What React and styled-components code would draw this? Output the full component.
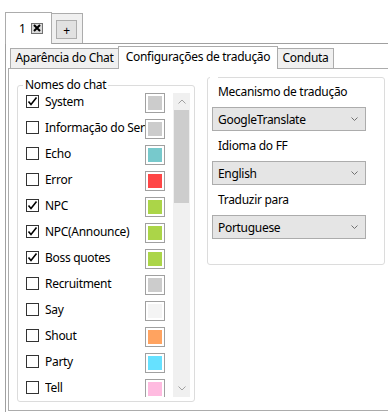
import React from 'react';
import styled, { createGlobalStyle } from 'styled-components';

const GlobalStyle = createGlobalStyle`
    html, body {
        margin: 0;
        padding: 0;
        background: #ffffff;
        width: 388px;
        height: 412px;
        overflow: hidden;
    }
    body {
        font-family: "Noto Sans", "Open Sans", sans-serif;
        font-size: 12px;
        letter-spacing: -0.3px;
        color: #000000;
    }
`

const chatNames = [
    { name: 'System', checked: true, color: '#cccccc' },
    { name: 'Informação do Servidor', checked: false, color: '#cccccc' },
    { name: 'Echo', checked: false, color: '#77c9cc' },
    { name: 'Error', checked: false, color: '#ff4646' },
    { name: 'NPC', checked: true, color: '#abd548' },
    { name: 'NPC(Announce)', checked: true, color: '#abd548' },
    { name: 'Boss quotes', checked: true, color: '#abd548' },
    { name: 'Recruitment', checked: false, color: '#cccccc' },
    { name: 'Say', checked: false, color: '#f4f4f4' },
    { name: 'Shout', checked: false, color: '#ffa360' },
    { name: 'Party', checked: false, color: '#66e1ff' },
    { name: 'Tell', checked: false, color: '#ffbbe0' },
]

const combos = [
    { label: 'Mecanismo de tradução', value: 'GoogleTranslate' },
    { label: 'Idioma do FF', value: 'English' },
    { label: 'Traduzir para', value: 'Portuguese' },
]

const Chevron = ({ up }) => (
    <svg width="8" height="5" viewBox="0 0 8 5">
        <path d={up ? 'M0.5 4.5 L4 1 L7.5 4.5' : 'M0.5 0.5 L4 4 L7.5 0.5'} fill="none" stroke="#a0a0a0" strokeWidth="1" />
    </svg>
)

const App = () => {
    return (
        <>
            <GlobalStyle />
            <Window>
                <TabStrip>
                    <OuterTab $selected>
                        <span>1</span>
                        <CloseBox>
                            <svg width="8" height="8" viewBox="0 0 8 8">
                                <path d="M1 1 L7 7 M7 1 L1 7" stroke="#000" strokeWidth="2" />
                            </svg>
                        </CloseBox>
                    </OuterTab>
                    <OuterTab>
                        <PlusButton>+</PlusButton>
                    </OuterTab>
                </TabStrip>
                <OuterPage>
                    <InnerStrip>
                        <InnerTab $width={109}>Aparência do Chat</InnerTab>
                        <InnerTab $width={160} $selected>Configurações de tradução</InnerTab>
                        <InnerTab $width={57}>Conduta</InnerTab>
                    </InnerStrip>
                    <InnerPage>
                        <NamesGroup>
                            <Legend>Nomes do chat</Legend>
                            <ListArea>
                                <Items>
                                    {chatNames.map((c) => (
                                        <Row key={c.name}>
                                            <CheckBox>
                                                {c.checked && (
                                                    <svg width="11" height="11" viewBox="0 0 11 11">
                                                        <path d="M1.5 5.5 L4 8.5 L9.5 1.5" fill="none" stroke="#000" strokeWidth="1.6" />
                                                    </svg>
                                                )}
                                            </CheckBox>
                                            <Name>{c.name}</Name>
                                            <Swatch>
                                                <SwatchFill style={{ background: c.color }} />
                                            </Swatch>
                                        </Row>
                                    ))}
                                </Items>
                                <ScrollBar>
                                    <ArrowBox><Chevron up /></ArrowBox>
                                    <Thumb />
                                    <Track />
                                    <ArrowBox><Chevron /></ArrowBox>
                                </ScrollBar>
                            </ListArea>
                        </NamesGroup>
                        <SettingsGroup>
                            <EmptyLegend />
                            <Settings>
                                {combos.map((c) => (
                                    <React.Fragment key={c.label}>
                                        <FieldLabel>{c.label}</FieldLabel>
                                        <Combo>
                                            <span>{c.value}</span>
                                            <svg width="7" height="4" viewBox="0 0 7 4">
                                                <path d="M0.5 0.5 L3.5 3.5 L6.5 0.5" fill="none" stroke="#707070" strokeWidth="1" />
                                            </svg>
                                        </Combo>
                                    </React.Fragment>
                                ))}
                            </Settings>
                        </SettingsGroup>
                    </InnerPage>
                </OuterPage>
            </Window>
        </>
    );
}

export default App;

const Window = styled.div`
    padding: 12px 0 0 5px;
`

const TabStrip = styled.div`
    display: flex;
    align-items: flex-end;
    height: 31px;
`

const OuterTab = styled.div`
    position: relative;
    box-sizing: border-box;
    display: flex;
    align-items: center;
    border: 1px solid #acacac;
    border-bottom: none;
    background: ${(p) => (p.$selected ? '#ffffff' : '#f0f0f0')};
    height: ${(p) => (p.$selected ? '32px' : '30px')};
    width: ${(p) => (p.$selected ? '47px' : '32px')};
    margin-bottom: ${(p) => (p.$selected ? '-1px' : '0')};
    margin-left: ${(p) => (p.$selected ? '0' : '-1px')};
    padding: ${(p) => (p.$selected ? '0 0 1px 13px' : '0 0 0 4px')};
    z-index: ${(p) => (p.$selected ? 2 : 1)};
    gap: 5px;
    font-size: 12px;
`

const CloseBox = styled.div`
    box-sizing: border-box;
    width: 12px;
    height: 11px;
    border: 1px solid #707070;
    background: #dadada;
    display: flex;
    align-items: center;
    justify-content: center;
`

const PlusButton = styled.div`
    box-sizing: border-box;
    width: 21px;
    height: 19px;
    margin-top: 1px;
    border: 1px solid #adadad;
    background: #e1e1e1;
    display: flex;
    align-items: center;
    justify-content: center;
    font-size: 12px;
    padding-top: 2px;
`

const OuterPage = styled.div`
    width: 420px;
    border: 1px solid #a0a0a0;
    padding: 2px;
`

const InnerStrip = styled.div`
    display: flex;
    align-items: flex-end;
    height: 22px;
    padding-left: 2px;
`

const InnerTab = styled.div`
    position: relative;
    box-sizing: border-box;
    width: ${(p) => p.$width}px;
    height: ${(p) => (p.$selected ? '23px' : '20px')};
    margin-bottom: ${(p) => (p.$selected ? '-1px' : '0')};
    margin-left: -1px;
    &:first-child { margin-left: 0; }
    border: 1px solid #acacac;
    border-bottom: none;
    background: ${(p) => (p.$selected ? '#ffffff' : '#f0f0f0')};
    z-index: ${(p) => (p.$selected ? 2 : 1)};
    display: flex;
    justify-content: center;
    align-items: flex-start;
    padding-top: ${(p) => (p.$selected ? '2px' : '1px')};
    line-height: 16px;
    white-space: nowrap;
`

const InnerPage = styled.div`
    border: 1px solid #acacac;
    padding: 8px;
    display: flex;
    align-items: flex-start;
    gap: 12px;
`

const NamesGroup = styled.fieldset`
    box-sizing: border-box;
    width: 178px;
    margin: 0;
    padding: 0 4px 4px 0;
    border: 1px solid #dcdcdc;
    border-radius: 3px;
    min-width: 0;
`

const Legend = styled.legend`
    margin-left: 5px;
    padding: 0 2px;
    line-height: 16px;
    font-size: 12px;
`

const ListArea = styled.div`
    display: flex;
    height: 304px;
`

const Items = styled.div`
    width: 155px;
    height: 304px;
    overflow: hidden;
`

const Row = styled.div`
    display: flex;
    align-items: flex-start;
    height: 26px;
    padding-left: 8px;
`

const CheckBox = styled.div`
    box-sizing: border-box;
    flex: none;
    width: 13px;
    height: 13px;
    margin-top: 2px;
    border: 1px solid #333333;
    background: #ffffff;
    display: flex;
    align-items: center;
    justify-content: center;
`

const Name = styled.div`
    width: 100px;
    margin-left: 6px;
    line-height: 17px;
    white-space: nowrap;
    overflow: hidden;
`

const Swatch = styled.div`
    box-sizing: border-box;
    flex: none;
    width: 20px;
    height: 20px;
    border: 1px solid #a0a0a0;
    background: #ffffff;
    padding: 2px;
`

const SwatchFill = styled.div`
    width: 14px;
    height: 14px;
`

const ScrollBar = styled.div`
    width: 17px;
    height: 304px;
    background: #f0f0f0;
    display: flex;
    flex-direction: column;
`

const ArrowBox = styled.div`
    height: 17px;
    display: flex;
    align-items: center;
    justify-content: center;
`

const Thumb = styled.div`
    height: 93px;
    margin: 0 1px;
    background: #cdcdcd;
`

const Track = styled.div`
    flex: 1;
`

const SettingsGroup = styled.fieldset`
    box-sizing: border-box;
    width: 178px;
    height: 188px;
    margin: 0;
    padding: 0;
    border: 1px solid #dcdcdc;
    border-radius: 3px;
    min-width: 0;
`

const EmptyLegend = styled.legend`
    width: 8px;
    height: 0;
    margin-left: 2px;
    padding: 0;
`

const Settings = styled.div`
    display: flex;
    flex-direction: column;
    margin-top: -1px;
`

const FieldLabel = styled.div`
    height: 30px;
    line-height: 30px;
    padding-left: 10px;
`

const Combo = styled.div`
    box-sizing: border-box;
    width: 154px;
    height: 24px;
    margin-left: 4px;
    border: 1px solid #acacac;
    background: #e5e5e5;
    display: flex;
    align-items: center;
    justify-content: space-between;
    padding: 0 7px 0 5px;
`
